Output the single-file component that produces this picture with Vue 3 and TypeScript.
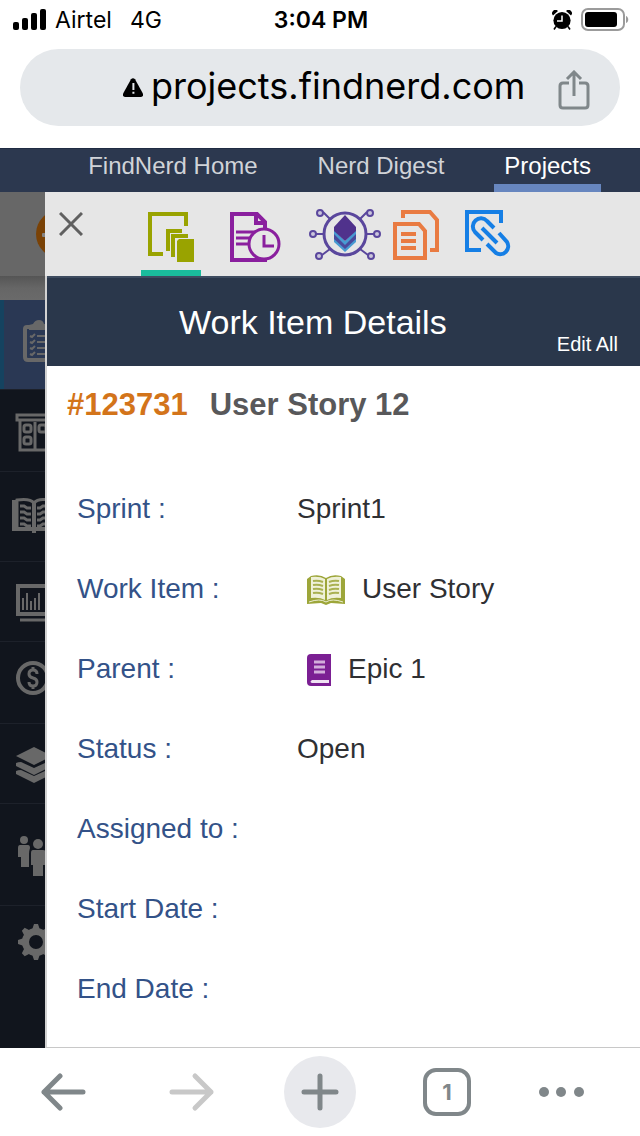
<script setup lang="ts">
interface NavLink {
  label: string
  active?: boolean
}
interface Detail {
  label: string
  value?: string
  icon?: 'story' | 'epic'
}

const links: NavLink[] = [
  { label: 'FindNerd Home' },
  { label: 'Nerd Digest' },
  { label: 'Projects', active: true },
]

const details: Detail[] = [
  { label: 'Sprint :', value: 'Sprint1' },
  { label: 'Work Item :', value: 'User Story', icon: 'story' },
  { label: 'Parent :', value: 'Epic 1', icon: 'epic' },
  { label: 'Status :', value: 'Open' },
  { label: 'Assigned to :' },
  { label: 'Start Date :' },
  { label: 'End Date :' },
]

const gearTeeth = [0, 45, 90, 135, 180, 225, 270, 315]
</script>

<template>
  <div class="screen">
    <header class="chrome">
      <div class="status">
        <div class="carrier">
          <svg class="signal" viewBox="0 0 34 22" aria-hidden="true">
            <rect x="0" y="13" width="6" height="8" rx="2" />
            <rect x="9" y="9" width="6" height="12" rx="2" />
            <rect x="18" y="4" width="6" height="17" rx="2" />
            <rect x="27" y="0" width="6" height="21" rx="2" />
          </svg>
          <span>Airtel</span>
          <span class="network">4G</span>
        </div>
        <span class="time">3:04 PM</span>
        <div class="indicators">
          <svg class="alarm" viewBox="0 0 20 20" aria-hidden="true">
            <circle cx="10" cy="10.500" r="8.600" />
            <path d="M1 5.500a3.300 3.300 0 0 1 5-4.500zM19 5.500a3.300 3.300 0 0 0-5-4.500z" />
            <path d="M4 16.500l-2 3M16 16.500l2 3" stroke="#000" stroke-width="1.600" />
            <path d="M10 5.500v5.500H5" fill="none" stroke="#fff" stroke-width="1.500" />
          </svg>
          <svg class="battery" viewBox="0 0 48 24" aria-hidden="true">
            <rect x="1" y="1" width="42" height="21" rx="6" fill="#fff" stroke="#9b9b9b" stroke-width="2" />
            <rect x="4" y="4" width="32" height="15" rx="3" />
            <path d="M45 8c3 1 3 6 0 7z" fill="#9b9b9b" />
          </svg>
        </div>
      </div>
      <div class="address">
        <button class="url" type="button">
          <svg viewBox="0 0 20 19" aria-hidden="true">
            <path d="M8 1.200q2-2 4 0l8 14.500q.800 2.700-2 3.300H2q-2.800-.600-2-3.300z" />
            <path d="M10.400 5v7M10.400 13.800v2" stroke="#e5e8eb" stroke-width="2" />
          </svg>
          <span>projects.findnerd.com</span>
        </button>
        <button class="share" type="button" aria-label="Share">
          <svg viewBox="0 0 32 40" aria-hidden="true">
            <path d="M11 13H5q-3 0-3 3v19q0 3 3 3h22q3 0 3-3V16q0-3-3-3h-6M16 26V2M9 9l7-7 7 7" />
          </svg>
        </button>
      </div>
    </header>

    <nav class="site-nav">
      <a v-for="link in links" :key="link.label" href="#" :class="{ active: link.active }">{{ link.label }}</a>
    </nav>

    <main class="content">
      <aside class="rail">
        <div class="rail-top">
          <svg viewBox="0 0 45 84" aria-hidden="true">
            <circle cx="60" cy="42" r="24" fill="#7a4206" />
            <rect x="42" y="41" width="4" height="4" rx="1" fill="#858585" />
          </svg>
        </div>
        <div class="rail-gap"></div>
        <a class="rail-item h90 current" href="#" aria-label="Work items">
          <svg viewBox="0 0 45 90">
            <path d="M29 27h-2q-2 0-2 2v28q0 3 3 3h20" fill="none" stroke="#686868" stroke-width="4" />
            <path d="M29 25l4-1q2-4 6-4t5 4h4v6H29z" />
            <path d="M30 36l2 1 3-3M30 42l2 1 3-3M30 48l2 1 3-3M30 54l2 1 3-3M37 36h9M37 42h9M37 48h9M37 54h9" fill="none" stroke="#686868" stroke-width="2" />
          </svg>
        </a>
        <a class="rail-item h82" href="#" aria-label="Board">
          <svg viewBox="0 0 45 82" class="line">
            <path d="M17 25h30v5H17zM20 30v30h27M35 32v28" stroke-width="3" />
            <rect x="24" y="35" width="7" height="7" rx="2" stroke-width="3" />
            <rect x="24" y="47" width="7" height="7" rx="2" stroke-width="3" />
            <rect x="39" y="35" width="7" height="7" rx="2" stroke-width="3" />
          </svg>
        </a>
        <a class="rail-item h90" href="#" aria-label="Stories">
          <svg viewBox="0 0 45 90" class="line">
            <path d="M16 30h-2v27h34M34 31v30" stroke-width="4" />
            <path d="M17 56V28q13-2 17 3 4-5 14-3" stroke-width="3" />
            <path d="M20 34h4l3 2h4M20 40h4l3 2h4M20 46h4l3 2h4M20 52h4l3 2h4M37 36h3l3-2h4M37 42h3l3-2h4M37 48h3l3-2h4M37 54h3l3-2h4" stroke-width="3" />
          </svg>
        </a>
        <a class="rail-item h80" href="#" aria-label="Reports">
          <svg viewBox="0 0 45 80" class="line">
            <rect x="18" y="24" width="29" height="28" stroke-width="4" />
            <path d="M20 58h28" stroke-width="3" />
            <path d="M23 36v12M27 31v17M31 39v9M35 36v12M39 31v17" stroke-width="2" />
          </svg>
        </a>
        <a class="rail-item h82" href="#" aria-label="Billing">
          <svg viewBox="0 0 45 82" class="line">
            <circle cx="33" cy="36" r="15" stroke-width="4" />
            <path d="M37 32q0-4-4-4t-4 4q0 3 4 4t4 4q0 4-4 4t-4-4M33 25v4M33 43v4" stroke-width="3" />
          </svg>
        </a>
        <a class="rail-item h80" href="#" aria-label="Releases">
          <svg viewBox="0 0 45 80">
            <path d="M34 23l18 9-18 9-18-9z" />
            <path d="M16 39q2-1 5-1l13 6 13-6q3 0 5 1v3L34 51 16 42z" />
            <path d="M16 47q2-1 5-1l13 6 13-6q3 0 5 1v3L34 59 16 50z" />
          </svg>
        </a>
        <a class="rail-item h102" href="#" aria-label="Team">
          <svg viewBox="0 0 45 102">
            <circle cx="24" cy="36" r="4" />
            <path d="M20 41h8q2 0 2 3-1 3-1 6v13h-8V53h-3v-9q0-3 2-3z" />
            <circle cx="38" cy="40" r="5" />
            <path d="M33 46h10q3 0 3 3v12h-3v11H33V61h-2V49q0-3 2-3z" />
          </svg>
        </a>
        <a class="rail-item last" href="#" aria-label="Settings">
          <svg viewBox="0 0 45 82">
            <circle cx="36" cy="36" r="10.500" fill="none" stroke="#686868" stroke-width="7" />
            <path v-for="a in gearTeeth" :key="a" d="M32 24l2-6h4l2 6z" :transform="`rotate(${a} 36 36)`" />
          </svg>
        </a>
      </aside>

      <section class="drawer">
        <div class="toolbar">
          <button class="close" type="button" aria-label="Close">
            <svg viewBox="0 0 24 24" aria-hidden="true"><path d="M1 1l22 22M23 1L1 23" /></svg>
          </button>
          <button class="tool details selected" type="button" aria-label="Details">
            <svg width="46" height="56" viewBox="149 206 46 56">
              <g fill="none" stroke="#99a300" stroke-width="3">
                <path d="M187 226v-12h-36v40h13" stroke-width="4" />
                <path d="M169 251v-20h14" stroke-width="4" />
                <path d="M174 257v-21h15" stroke-width="4" />
              </g>
              <path d="M180 239h15v23h-17v-21z" fill="#99a300" />
            </svg>
          </button>
          <button class="tool history" type="button" aria-label="History">
            <svg width="52" height="56" viewBox="230 206 52 56">
              <g fill="none" stroke="#8a1f9e" stroke-width="3">
                <path d="M268 260h-35v-46h25l8 8v8M257 214v9h9" stroke-width="4" />
                <path d="M237 232h20M237 238h17M237 244h14" />
                <circle cx="265" cy="244" r="15" fill="#e6e6e6" />
                <path d="M265 235v11h10" />
              </g>
            </svg>
          </button>
          <button class="tool network-tool" type="button" aria-label="Dependencies">
            <svg width="72" height="56" viewBox="309 206 72 56">
              <g fill="none" stroke="#5a479d" stroke-width="3">
                <circle cx="345" cy="234" r="21" />
                <path d="M324 234h-8M366 234h8M330 219l-7-7M360 219l7-7M330 249l-8 6M360 249l8 6" stroke-width="2" />
                <g fill="#cbc6dc" stroke-width="2">
                  <circle cx="313" cy="234" r="3" /><circle cx="377" cy="234" r="3" />
                  <circle cx="320" cy="213" r="3" /><circle cx="370" cy="213" r="3" />
                  <circle cx="319" cy="256" r="3" /><circle cx="371" cy="256" r="3" />
                </g>
              </g>
              <path d="M334 230l11 11 11-11v12l-11 10-11-10z" fill="#489bd2" />
              <path d="M334 234l11 11 11-11v5l-11 10-11-10z" fill="#4a4a9c" />
              <path d="M345 215l11 12v4l-11 10-11-10v-4z" fill="#50328c" />
            </svg>
          </button>
          <button class="tool copy" type="button" aria-label="Copy">
            <svg width="46" height="56" viewBox="393 206 46 56">
              <g fill="none" stroke="#e97b42" stroke-width="4">
                <path d="M403 218v-6h27l7 8v30h-7" />
                <path d="M395 224h24l6 7v27h-30z" />
                <path d="M401 234h15M401 241h15M401 248h15" />
              </g>
            </svg>
          </button>
          <button class="tool attach" type="button" aria-label="Attach link">
            <svg width="46" height="56" viewBox="465 206 46 56">
              <g fill="none" stroke="#167fe5" stroke-width="4">
                <path d="M501 223v-11h-34v38h14" />
                <path d="M494 228l-7-7a8 8 0 0 0-12 11l8 8M482 228l15 15M499 233l8 9a8 8 0 0 1-11 11l-9-9" />
              </g>
            </svg>
          </button>
        </div>

        <header class="drawer-head">
          <h1>Work Item Details</h1>
          <button type="button" class="edit">Edit All</button>
        </header>

        <h2 class="item-title"><span class="item-id">#123731</span><span>User Story 12</span></h2>

        <dl class="fields">
          <div v-for="row in details" :key="row.label" class="field">
            <dt>{{ row.label }}</dt>
            <dd :class="{ iconed: row.icon }">
              <svg v-if="row.icon === 'story'" width="38" height="30" viewBox="0 0 38 30" aria-hidden="true">
                <path d="M0 4l4-3q9-2 15 2 6-4 15-2l4 3v25l-14-1-5 2-5-2-14 1z" fill="#9da63a" />
                <path d="M4 2q9-1 14 2v21q-5-3-14-2zM34 2q-9-1-14 2v21q5-3 14-2z" fill="#eff1d9" />
                <path d="M2 27q11-4 17 0 6-4 17 0" fill="none" stroke="#edf0d3" stroke-width="1" />
                <path d="M6 6q5-1 10 1M6 10q5-1 10 1M6 14q5-1 10 1M6 18q5-1 10 1M22 7q5-2 10-1M22 11q5-2 10-1M22 15q5-2 10-1M22 19q5-2 10-1" fill="none" stroke="#a9b152" stroke-width="2" />
              </svg>
              <svg v-if="row.icon === 'epic'" width="24" height="32" viewBox="0 0 24 32" aria-hidden="true">
                <path d="M4 0h20v32H4q-4 0-4-4V4q0-4 4-4z" fill="#7b1f93" />
                <path d="M7 8h11M7 13h11M7 18h11" stroke="#d2addb" stroke-width="3" />
                <path d="M5 26h17v3H5q-3-1 0-3z" fill="#f0e2f3" />
              </svg>
              <span v-if="row.value">{{ row.value }}</span>
            </dd>
          </div>
        </dl>
      </section>
    </main>

    <footer class="browser-bar">
      <button type="button" aria-label="Back">
        <svg width="46" height="40" viewBox="0 0 46 40"><path d="M42 20H3M19 4L3 20l16 16" /></svg>
      </button>
      <button type="button" aria-label="Forward" class="muted">
        <svg width="46" height="40" viewBox="0 0 46 40"><path d="M3 20h39M26 4l16 16-16 16" /></svg>
      </button>
      <button type="button" aria-label="New tab">
        <span class="plus"><svg width="40" height="40" viewBox="0 0 40 40"><path d="M4 20h32M20 4v32" /></svg></span>
      </button>
      <button type="button" aria-label="Open tabs"><span class="tabs">1</span></button>
      <button type="button" aria-label="More">
        <svg width="46" height="12" viewBox="0 0 46 12">
          <g class="dots"><circle cx="6" cy="6" r="5" /><circle cx="23" cy="6" r="5" /><circle cx="41" cy="6" r="5" /></g>
        </svg>
      </button>
    </footer>
  </div>
</template>

<style>
body {
  margin: 0;
}
</style>

<style scoped>
.screen {
  display: flex;
  flex-direction: column;
  min-height: 100vh;
  background: #fff;
  color: #000;
  font-family: "Liberation Sans", Arial, sans-serif;
}
button {
  display: flex;
  align-items: center;
  justify-content: center;
  margin: 0;
  padding: 0;
  border: 0;
  background: none;
  color: inherit;
  font: inherit;
}
a {
  color: inherit;
  text-decoration: none;
}
svg {
  display: block;
  flex: none;
}

.chrome {
  height: 148px;
  font-family: Inter, "Liberation Sans", sans-serif;
}
.status {
  display: grid;
  grid-template-columns: 1fr auto 1fr;
  align-items: center;
  height: 40px;
  margin-bottom: 9px;
  padding: 0 11px 0 13px;
  font-size: 23px;
}
.carrier,
.indicators {
  display: flex;
  align-items: center;
}
.signal {
  width: 34px;
  height: 22px;
  margin-right: 8px;
}
.network {
  margin-left: 18px;
}
.time {
  font-weight: 600;
}
.indicators {
  justify-content: flex-end;
  gap: 9px;
}
.alarm {
  width: 20px;
  height: 20px;
}
.battery {
  width: 48px;
  height: 24px;
}
.address {
  display: flex;
  align-items: center;
  height: 77px;
  margin: 0 20px;
  padding: 0 30px 0 103px;
  box-sizing: border-box;
  border-radius: 39px;
  background: #e5e8eb;
}
.url {
  gap: 8px;
  font-size: 36px;
  line-height: 44px;
  padding-bottom: 3px;
  white-space: nowrap;
}
.url svg {
  width: 20px;
  height: 19px;
  margin-top: 3px;
}
.share {
  margin-left: auto;
  padding-top: 4px;
}
.share svg {
  width: 32px;
  height: 40px;
  fill: none;
  stroke: #80878a;
  stroke-width: 3;
}

.site-nav {
  display: flex;
  justify-content: flex-end;
  height: 44px;
  padding-right: 39px;
  background: #2c384f;
  border-top: 1px solid #1f2b43;
  box-sizing: border-box;
  color: #d0d3d8;
  font-size: 24px;
  line-height: 34px;
}
.site-nav a {
  margin-left: 40px;
  padding: 0 10px;
  white-space: nowrap;
}
.site-nav .active {
  color: #fff;
  border-bottom: 8px solid #6786bf;
}

.content {
  display: grid;
  grid-template-columns: 45px minmax(0, 1fr);
  flex: 1;
}
.rail {
  display: flex;
  flex-direction: column;
  overflow: hidden;
  background: #11151d;
}
.rail svg {
  width: 45px;
  fill: #686868;
}
.rail svg.line {
  fill: none;
  stroke: #686868;
}
.rail-top {
  height: 84px;
  background: #676767;
}
.rail-gap {
  height: 24px;
  background: linear-gradient(#555, #666 50%, #6a6a6a);
}
.rail-item {
  display: block;
  box-sizing: border-box;
  border-bottom: 1px solid #1d212a;
  overflow: hidden;
}
.rail-item.current {
  background: linear-gradient(90deg, #154360 4px, #2a3854 4px);
}
.h80 {
  height: 80px;
}
.h82 {
  height: 82px;
}
.h90 {
  height: 90px;
}
.h102 {
  height: 102px;
}
.rail-item.last {
  flex: 1;
  border-bottom: 0;
}

.drawer {
  border-left: 2px solid #d2d2d2;
  border-bottom: 1px solid #c8c8c8;
}
.toolbar {
  display: flex;
  height: 84px;
  margin-left: -2px;
  padding-left: 2px;
  background: #e6e6e6;
}
.close {
  width: 94px;
  box-sizing: border-box;
  padding: 0 58px 20px 12px;
}
.close svg {
  width: 24px;
  height: 24px;
  fill: none;
  stroke: #606060;
  stroke-width: 3;
}
.tool {
  box-sizing: border-box;
  border-bottom: 6px solid transparent;
  padding-top: 6px;
}
.details {
  width: 60px;
}
.details.selected {
  border-bottom-color: #1abc9c;
}
.history {
  width: 108px;
}
.network-tool {
  width: 72px;
}
.copy {
  width: 70px;
}
.attach {
  width: 74px;
}
.close,
.tool {
  flex: none;
}
.drawer-head {
  display: grid;
  grid-template-columns: 1fr auto 1fr;
  height: 90px;
  box-sizing: border-box;
  border-top: 2px solid #3e4c60;
  background: #2a374b;
  color: #fff;
}
.drawer-head h1 {
  grid-column: 1 / 3;
  margin: 0;
  padding-left: 132px;
  font-size: 34px;
  font-weight: 400;
  line-height: 88px;
  white-space: nowrap;
}
.edit {
  justify-self: end;
  align-self: end;
  padding: 0 22px 10px 0;
  font-size: 20px;
  line-height: 24px;
  white-space: nowrap;
}
.item-title {
  display: flex;
  gap: 22px;
  margin: 0;
  padding: 0 20px;
  height: 103px;
  box-sizing: border-box;
  color: #58585a;
  font-size: 31px;
  line-height: 78px;
}
.item-id {
  color: #d3741a;
}
.fields {
  margin: 0;
  padding: 0 30px;
  font-size: 28px;
  line-height: 80px;
}
.field {
  display: grid;
  grid-template-columns: 220px 1fr;
  height: 80px;
}
.fields dt {
  color: #335288;
}
.fields dd {
  display: flex;
  align-items: center;
  margin: 0;
  color: #2f3033;
}
.fields dd.iconed {
  gap: 17px;
  padding-left: 10px;
}
.fields dd svg {
  margin-top: 2px;
}

.browser-bar {
  display: grid;
  grid-template-columns: 128fr 128fr 128fr 126fr 102fr 28fr;
  height: 88px;
  background: #fff;
  color: #80878a;
}
.browser-bar svg {
  fill: none;
  stroke: currentColor;
  stroke-width: 5;
  stroke-linecap: round;
  stroke-linejoin: round;
}
.browser-bar .dots {
  fill: currentColor;
  stroke: none;
}
.browser-bar .muted {
  color: #c8c8c8;
}
.plus {
  display: grid;
  place-items: center;
  width: 72px;
  height: 72px;
  border-radius: 50%;
  background: #e8e9ed;
}
.tabs {
  display: grid;
  place-items: center;
  width: 48px;
  height: 48px;
  box-sizing: border-box;
  border: 4px solid #80878a;
  border-radius: 13px;
  font-family: Inter, "Liberation Sans", sans-serif;
  font-size: 22px;
  font-weight: 700;
}
</style>
